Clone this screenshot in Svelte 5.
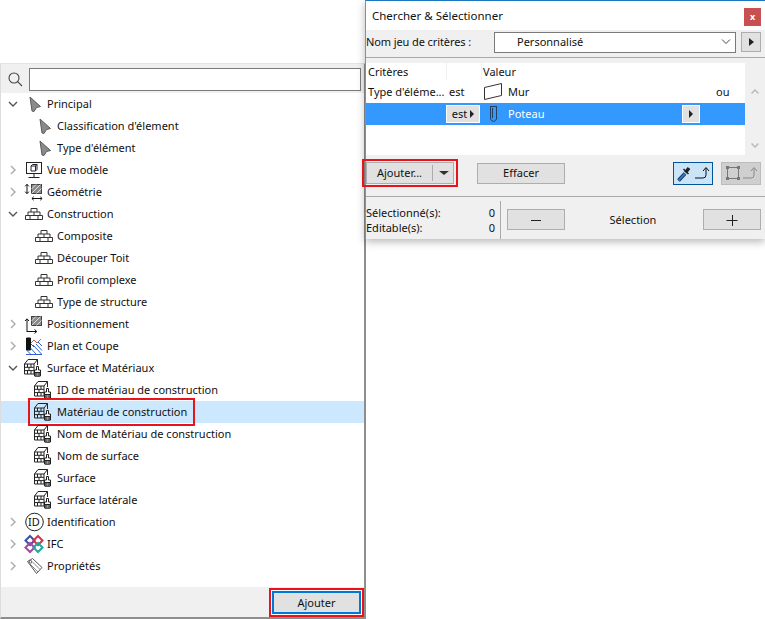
<script>
  const cursor = 'cursor', brick = 'brick', mat = 'mat';
  const rows = [
    { label: 'Principal', open: true, icon: cursor },
    { label: "Classification d'élement", sub: true, icon: cursor },
    { label: "Type d'élément", sub: true, icon: cursor },
    { label: 'Vue modèle', closed: true, icon: 'screen' },
    { label: 'Géométrie', closed: true, icon: 'geo' },
    { label: 'Construction', open: true, icon: brick },
    { label: 'Composite', sub: true, icon: brick },
    { label: 'Découper Toit', sub: true, icon: brick },
    { label: 'Profil complexe', sub: true, icon: brick },
    { label: 'Type de structure', sub: true, icon: brick },
    { label: 'Positionnement', closed: true, icon: 'pos' },
    { label: 'Plan et Coupe', closed: true, icon: 'plan' },
    { label: 'Surface et Matériaux', open: true, icon: mat },
    { label: 'ID de matériau de construction', sub: true, icon: mat },
    { label: 'Matériau de construction', sub: true, icon: mat, selected: true },
    { label: 'Nom de Matériau de construction', sub: true, icon: mat },
    { label: 'Nom de surface', sub: true, icon: mat },
    { label: 'Surface', sub: true, icon: mat },
    { label: 'Surface latérale', sub: true, icon: mat },
    { label: 'Identification', closed: true, icon: 'id' },
    { label: 'IFC', closed: true, icon: 'ifc' },
    { label: 'Propriétés', closed: true, icon: 'tag' }
  ];
</script>

<div class="desk">
  <section class="tree-win">
    <div class="search">
      <svg width="16" height="16" viewBox="0 0 16 16" fill="none" stroke="#444" stroke-width="1.1">
        <circle cx="7" cy="7" r="5" /><path d="M10.600 10.600 15 15" />
      </svg>
      <div class="search-input"></div>
    </div>

    <div class="tree">
      {#each rows as row}
        <div class="row" class:sub={row.sub} class:selected={row.selected}>
          {#if !row.sub}
            <svg class="caret" width="10" height="10" viewBox="0 0 10 10" fill="none" stroke-width="1.4">
              {#if row.open}
                <path d="M1 3 5 7 9 3" stroke="#555" />
              {:else}
                <path d="M3 1 7 5 3 9" stroke="#aaa" />
              {/if}
            </svg>
          {/if}
          <svg class="icon" width="20" height="20" viewBox="0 0 20 20" fill="none" stroke="#222" stroke-width="1">
            {#if row.icon === 'cursor'}
              <path d="M6 3 16.500 12.500 12.500 13.500 10 17.500 8 17Z" fill="#8a8a8a" stroke="#5a5a5a" />
            {:else if row.icon === 'brick'}
              <path d="M7 8V4.500H13V8M4 11.500V8H16V11.500M1.500 15.500V11.500H18.500V15.500ZM10 8V11.500M6 11.500V15.500M14 11.500V15.500" stroke="#333" />
            {:else if row.icon === 'screen'}
              <rect x="2.500" y="2.500" width="15" height="11" stroke="#222" />
              <path d="M7 6H11.500V11H7ZM7 6 8.500 4.500H13V9.500L11.500 11M11.500 6 13 4.500M10 13.500V17M4.500 17.500H15.500" />
            {:else if row.icon === 'geo'}
              <rect x="7.500" y="2.500" width="10" height="9" fill="#8c8c8c" stroke="#444" />
              <path d="M7.500 11.500 16.500 2.500M7.500 7 12 2.500M12.500 11.500 17.500 6.500" stroke="#ddd" />
              <path d="M3 2.500V11.500M1.200 4.300 3 2.300 4.800 4.300M1.200 9.700 3 11.700 4.800 9.700M8 16.500H18M9.700 14.800 7.900 16.500 9.700 18.200M16.300 14.800 18.100 16.500 16.300 18.200" stroke="#111" />
            {:else if row.icon === 'pos'}
              <rect x="7.500" y="2.500" width="10" height="9" fill="#8c8c8c" stroke="#444" />
              <path d="M7.500 11.500 16.500 2.500M7.500 7 12 2.500M12.500 11.500 17.500 6.500" stroke="#ddd" />
              <path d="M3 18V5M1 7 3 4.800 5 7M3 17.500H12.500M10.500 15.500 12.800 17.500 10.500 19.500" stroke="#111" />
            {:else if row.icon === 'plan'}
              <path d="M2.500 2H6.500V14H2.500Z" fill="#111" stroke="#111" />
              <path d="M2 18.500H18M7 8 10 11M2.500 14 7 18.500M6.500 12 12 18M9 9 17.500 18M12 8 18 14.500M14 6 18 10" stroke="#2f5fd0" />
              <path d="M7 7 10 4 13 7 17 3" stroke="#d0302a" stroke-width="0.800" />
            {:else if row.icon === 'mat'}
              <g transform="translate(-1 -1)">
                <path d="M1.500 7 5 2.500H14.500V8M11 7 14.500 2.500" stroke="#222" />
                <path d="M1.500 7H11V17H1.500ZM1.500 10.300H11M1.500 13.600H11M4.500 7V10.300M8 7V10.300M4.500 13.600V17M8 13.600V17M6 10.300V13.600" stroke="#222" />
                <path d="M13.500 9.500H15.500V13H17.500V19H11.500V13H13.500Z" fill="#fff" stroke="#222" />
                <path d="M12 15.500H17V19H12Z" fill="#444" stroke="#222" />
                <path d="M13 16V19M14.500 16V19M16 16V19" stroke="#ccc" stroke-width="0.600" />
              </g>
            {:else if row.icon === 'id'}
              <circle cx="10.500" cy="10" r="8.800" stroke="#222" />
            {:else if row.icon === 'ifc'}
              <path d="M6 2 10.500 6.500 6 11 1.500 6.500Z" stroke="#3e4fa8" stroke-width="2" />
              <path d="M14 2 18.500 6.500 14 11 9.500 6.500Z" stroke="#d6334a" stroke-width="2" />
              <path d="M6 9 10.500 13.500 6 18 1.500 13.500Z" stroke="#a447a8" stroke-width="2" />
              <path d="M14 9 18.500 13.500 14 18 9.500 13.500Z" stroke="#20a8a0" stroke-width="2" />
            {:else if row.icon === 'tag'}
              <path d="M3.500 5.500 8.500 2.500 18 11.500 12.500 17.500Z" stroke="#555" />
              <path d="M6 8 14 16M8.500 6 16 13.500" stroke="#888" />
              <circle cx="6.500" cy="5.800" r="1.300" stroke="#555" />
            {/if}
          </svg>
          {#if row.icon === 'id'}<span class="id-mark">ID</span>{/if}
          <span class="label">{row.label}</span>
          {#if row.selected}<span class="mark tree-mark"></span>{/if}
        </div>
      {/each}
    </div>

    <div class="tree-foot">
      <div class="add-wrap"><button class="add-btn">Ajouter</button></div>
    </div>
  </section>

  <section class="find-win">
    <header class="title">
      <span>Chercher &amp; Sélectionner</span>
      <button class="close">x</button>
    </header>

    <div class="find-body">
      <div class="preset">
        <span class="preset-label">Nom jeu de critères :</span>
        <div class="select">
          <span>Personnalisé</span>
          <svg width="10" height="6" viewBox="0 0 10 6" fill="none" stroke="#444"><path d="M1 .5 5 4.500 9 .5" /></svg>
        </div>
        <button class="tri-btn"><i class="tri"></i></button>
      </div>
      <div class="rule"></div>

      <div class="criteria">
        <div class="grid">
          <div class="crit-head">
            <span class="c1">Critères</span>
            <span class="c2"></span>
            <span class="c3 head-val">Valeur</span>
          </div>
          <div class="crit-row">
            <span class="c1">Type d'éléme...</span>
            <span class="c2">est</span>
            <span class="c3 val">
              <svg width="18" height="18" viewBox="0 0 18 18" fill="none" stroke="#333"><path d="M.5 4.500 17.500 .5V12.500L.5 16.500Z" /></svg>
              <span class="txt">Mur</span>
            </span>
            <span class="or">ou</span>
          </div>
          <div class="crit-row active">
            <span class="c1"></span>
            <span class="c2"><button class="est">est<i class="tri small"></i></button></span>
            <span class="c3 val">
              <svg width="18" height="20" viewBox="0 0 18 20" fill="none" stroke="#24405e"><path d="M6 2.500H13M6.500 2.500V15Q9.500 20 12.500 15V2.500M8.500 4V14" /></svg>
              <span class="txt">Poteau</span>
            </span>
            <button class="row-arrow"><i class="tri small"></i></button>
          </div>
        </div>
        <div class="scroll">
          <svg width="8" height="5" viewBox="0 0 8 5" fill="none" stroke="#bbb" stroke-width="1.500"><path d="M.5 4.500 4 1 7.500 4.500" /></svg>
          <svg width="8" height="5" viewBox="0 0 8 5" fill="none" stroke="#bbb" stroke-width="1.500"><path d="M.5 .5 4 4 7.500 .5" /></svg>
        </div>
      </div>

      <div class="actions">
        <div class="split-wrap">
          <button class="split">
            <span class="split-main">Ajouter...</span>
            <span class="split-arrow"></span>
          </button>
        </div>
        <button class="clear">Effacer</button>
        <span class="grow"></span>
        <button class="mode on">
          <svg width="36" height="20" viewBox="0 0 36 20" fill="none">
            <path d="M3.500 17.500 10 10.500" stroke="#123" stroke-width="3.600" />
            <path d="M3.500 17.500 10 10.500" stroke="#2a78d0" stroke-width="2.200" />
            <path d="M10.500 9.500 14 5" stroke="#222" stroke-width="3.400" />
            <path d="M8.500 6 13.500 11" stroke="#222" stroke-width="1.500" />
            <path d="M20 15H28Q31 15 31 12V5M28 8 31 4.500 34 8" stroke="#111" />
          </svg>
        </button>
        <button class="mode off">
          <svg width="36" height="20" viewBox="0 0 36 20" fill="none">
            <rect x="4.500" y="4.500" width="11" height="11" stroke="#777" />
            <path d="M3 3H6V6H3ZM14 3H17V6H14ZM3 14H6V17H3ZM14 14H17V17H14Z" fill="#777" />
            <path d="M20 15H28Q31 15 31 12V5M28 8 31 4.500 34 8" stroke="#8a8a8a" />
          </svg>
        </button>
      </div>
      <div class="rule"></div>

      <div class="selection">
        <div class="counts">
          <div class="count"><span>Sélectionné(s):</span><span>0</span></div>
          <div class="count"><span>Editable(s):</span><span>0</span></div>
        </div>
        <div class="sel-ctl">
          <button class="pm"><svg width="14" height="14" viewBox="0 0 14 14" stroke="#222"><path d="M2 7.500H12" /></svg></button>
          <span class="sel-label">Sélection</span>
          <button class="pm"><svg width="14" height="14" viewBox="0 0 14 14" stroke="#222"><path d="M1.500 7.500H12.500M7.500 2V13" /></svg></button>
        </div>
      </div>
    </div>
  </section>
</div>

<style>
  :global(body) { background: #fff; }

  .desk {
    position: relative;
    width: 765px;
    height: 619px;
    overflow: hidden;
    background: #fff;
    font-family: "Noto Sans", "Open Sans", sans-serif;
    font-size: 11px;
    color: #111;
  }
  button {
    font: inherit;
    color: inherit;
    padding: 0 0 1px;
    margin: 0;
    box-sizing: border-box;
  }

  /* two floating windows */
  .tree-win {
    position: absolute;
    left: 0;
    top: 63px;
    width: 366px;
    height: 556px;
    box-sizing: border-box;
    display: flex;
    flex-direction: column;
    border: 1px solid #aaa;
    border-left-color: #ddd;
    border-right: 2px solid #8e8e8e;
    border-bottom: 2px solid #8e8e8e;
    border-top-color: #e4e4e4;
  }
  .search {
    height: 29px;
    flex: none;
    box-sizing: border-box;
    display: flex;
    align-items: center;
    gap: 6px;
    padding: 1px 3px 0 6px;
    background: #f0f0f0;
  }
  .search-input {
    flex: 1;
    height: 23px;
    box-sizing: border-box;
    border: 1px solid #7a7a7a;
    background: #fff;
  }
  .tree { flex: 1; background: #fff; }
  .row {
    position: relative;
    height: 22px;
    display: flex;
    align-items: center;
    padding-left: 7px;
    box-sizing: border-box;
  }
  .row.sub { padding-left: 31px; }
  .row.selected { background: #cce8ff; }
  .caret { flex: none; margin-right: 4px; }
  .icon { flex: none; margin: 0 3px 0 2px; overflow: visible; }
  .label { white-space: nowrap; margin-bottom: 2px; }
  .id-mark {
    position: absolute;
    left: 23px;
    width: 20px;
    text-align: center;
    font-size: 11px;
    margin-bottom: 2px;
  }
  .tree-mark {
    position: absolute;
    left: 27px;
    top: -3px;
    width: 167px;
    height: 28px;
    box-sizing: border-box;
    border: 2px solid #e8141c;
  }
  .tree-foot {
    height: 30px;
    flex: none;
    display: flex;
    justify-content: flex-end;
    align-items: flex-end;
    background: #f0f0f0;
  }
  .add-wrap {
    border: 2px solid #e8141c;
    padding: 1px;
    background: #fff;
    display: flex;
  }
  .add-btn {
    width: 89px;
    height: 23px;
    border: 2px solid #0078d7;
    background: #e1e1e1;
  }

  .find-win {
    position: absolute;
    left: 365px;
    top: 0;
    width: 400px;
    height: 239px;
    box-sizing: border-box;
    display: flex;
    flex-direction: column;
    border-top: 1px solid #1a78c2;
    border-left: 1px solid #8e8e8e;
    background: #fff;
    box-shadow: 0 3px 8px rgba(0, 0, 0, 0.28);
  }
  .title {
    height: 29px;
    flex: none;
    box-sizing: border-box;
    display: flex;
    align-items: center;
    justify-content: space-between;
    padding: 2px 4px 0 6px;
    font-size: 11.500px;
  }
  .title span { margin-bottom: 2px; }
  .close {
    width: 17px;
    height: 18px;
    border: none;
    background: #c75050;
    color: #fff;
    font-weight: 700;
    font-size: 9px;
    line-height: 15px;
  }
  .find-body {
    flex: 1;
    background: #f0f0f0;
    display: flex;
    flex-direction: column;
  }
  .preset {
    height: 27px;
    flex: none;
    box-sizing: border-box;
    display: flex;
    align-items: center;
    padding: 0 4px 3px 0;
  }
  .preset-label { width: 128px; flex: none; margin-bottom: 2px; letter-spacing: -0.1px; }
  .select {
    width: 242px;
    height: 21px;
    box-sizing: border-box;
    border: 1px solid #7a7a7a;
    background: #fff;
    display: flex;
    align-items: center;
    justify-content: space-between;
    padding: 0 4px 0 22px;
  }
  .select span { margin-bottom: 2px; }
  .tri-btn {
    width: 20px;
    height: 20px;
    margin-left: 5px;
    border: 1px solid #adadad;
    background: #e1e1e1;
    display: flex;
    align-items: center;
    justify-content: center;
  }
  .tri {
    display: inline-block;
    border-left: 5px solid #222;
    border-top: 4px solid transparent;
    border-bottom: 4px solid transparent;
  }
  .tri.small { border-left-width: 4px; }
  .rule { height: 1px; background: #a9a9a9; flex: none; }
  .criteria {
    height: 92px;
    flex: none;
    display: flex;
    margin-top: 5px;
  }
  .grid { width: 379px; background: #fff; flex: none; }
  .crit-head {
    display: flex;
    height: 18px;
    align-items: center;
    background: #fff;
  }
  .crit-head .c2 {
    border-left: 1px solid #f0f0f0;
    border-right: 1px solid #f0f0f0;
    height: 18px;
    box-sizing: border-box;
  }
  .c1 { width: 80px; flex: none; padding-left: 2px; box-sizing: border-box; white-space: nowrap; margin-bottom: 2px; }
  .c2 { width: 36px; flex: none; padding-left: 3px; box-sizing: border-box; margin-bottom: 2px; }
  .c3 { flex: 1; padding-left: 2px; }
  .head-val { padding-left: 1px; margin-bottom: 2px; }
  .crit-row {
    display: flex;
    height: 22px;
    align-items: center;
    position: relative;
  }
  .crit-row .c2:has(.est) { margin-bottom: 0; }
  .crit-row.active { background: #3399ff; color: #fff; }
  .val { display: flex; align-items: center; gap: 6px; }
  .txt { margin-bottom: 2px; }
  .or { position: absolute; left: 350px; margin-bottom: 2px; }
  .est {
    width: 34px;
    height: 18px;
    margin-left: -3px;
    border: 1px solid #fff;
    background: #e1e1e1;
    color: #111;
    display: flex;
    align-items: center;
    justify-content: center;
    gap: 3px;
  }
  .row-arrow {
    position: absolute;
    left: 316px;
    width: 18px;
    height: 18px;
    border: 1px solid #fff;
    background: #e1e1e1;
    display: flex;
    align-items: center;
    justify-content: center;
  }
  .scroll {
    flex: 1;
    display: flex;
    flex-direction: column;
    justify-content: space-between;
    align-items: center;
    padding: 26px 0 7px;
  }
  .actions {
    height: 41px;
    flex: none;
    box-sizing: border-box;
    display: flex;
    align-items: center;
    padding: 0 4px 5px 0;
  }
  .split-wrap {
    border: 2px solid #e8141c;
    padding: 1px 2px;
    margin-left: -4px;
    display: flex;
  }
  .split {
    width: 88px;
    height: 22px;
    border: 1px solid #adadad;
    background: #e1e1e1;
    display: flex;
    align-items: center;
  }
  .split-main {
    width: 65px;
    text-align: center;
    border-right: 1px solid #adadad;
    height: 16px;
    line-height: 16px;
  }
  .split-arrow {
    margin-left: 6px;
    border-top: 4px solid #333;
    border-left: 5px solid transparent;
    border-right: 5px solid transparent;
  }
  .clear {
    width: 88px;
    height: 21px;
    margin-left: 19px;
    border: 1px solid #adadad;
    background: #e1e1e1;
  }
  .grow { flex: 1; }
  .mode {
    width: 40px;
    height: 23px;
    padding: 0;
    display: flex;
    align-items: center;
    justify-content: center;
    margin-left: 8px;
  }
  .mode.on { border: 1px solid #005499; background: #cce4f7; }
  .mode.off { border: 1px solid #bcbcbc; background: #cfcfcf; }
  .selection {
    height: 39px;
    flex: none;
    display: flex;
    align-items: center;
    margin-top: 3px;
  }
  .counts { width: 134px; box-sizing: border-box; padding-right: 5px; flex: none; }
  .count {
    display: flex;
    justify-content: space-between;
    height: 15px;
    line-height: 15px;
  }
  .sel-ctl {
    flex: 1;
    height: 38px;
    border-left: 1px solid #a9a9a9;
    display: flex;
    align-items: center;
    justify-content: space-between;
    padding: 0 4px 0 6px;
  }
  .pm {
    width: 58px;
    height: 21px;
    padding: 0;
    border: 1px solid #adadad;
    background: #e1e1e1;
    display: flex;
    align-items: center;
    justify-content: center;
  }
  .sel-label { position: relative; left: -1px; }
</style>
